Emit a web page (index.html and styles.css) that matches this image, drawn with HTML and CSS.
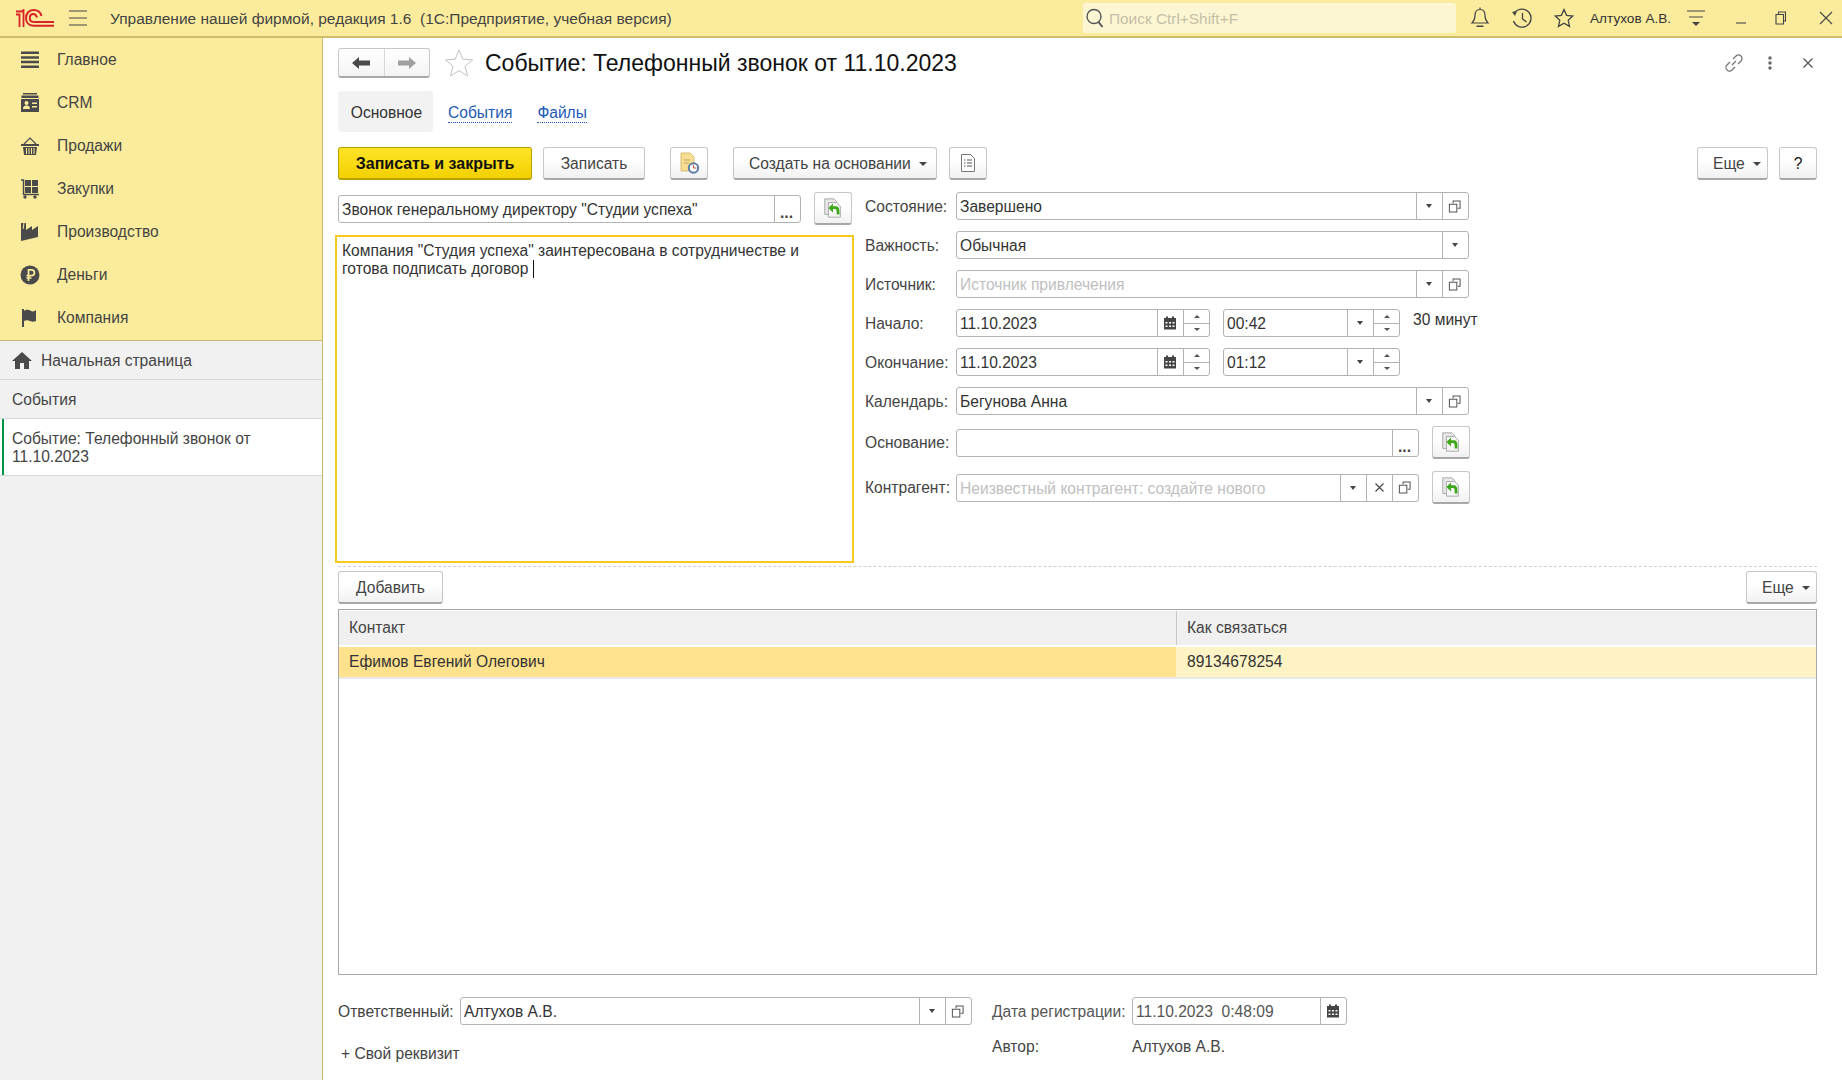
FILE: index.html
```html
<!DOCTYPE html>
<html lang="ru">
<head>
    <meta charset="UTF-8">
    <title>Событие: Телефонный звонок от 11.10.2023</title>
    <link rel="stylesheet" href="styles.css">
</head>
<body>
    <svg class="defs" width="0" height="0">
        <symbol id="i-copy" viewBox="0 0 14 14">
            <path d="M5.500 3.500V1h7.500v8h-2.500M1.500 4.500h8v8.500h-8z" fill="none" stroke="#555" stroke-width="1.100"/>
        </symbol>
        <symbol id="i-cal" viewBox="0 0 14 14">
            <path d="M1 2h12v11.500H1z" fill="#444"/>
            <path d="M3 0.500h2v3H3zM9 0.500h2v3H9z" fill="#444"/>
            <path d="M2.500 6h2v1.500h-2zM6 6h2v1.500H6zM9.500 6h2v1.500h-2zM2.500 9.500h2v1.500h-2zM6 9.500h2v1.500H6zM9.500 9.500h2v1.500h-2z" fill="#fff"/>
        </symbol>
        <symbol id="i-ret" viewBox="0 0 24 24">
            <path d="M3 2h10l3 3v14H3z" fill="#e8e8e8" stroke="#a4a4a4"/>
            <path d="M7 6h9l4 4v12H7z" fill="#f6f6f6" stroke="#a4a4a4"/>
            <path d="M7 12l5-5v3h3c3 0 4 2 4 6v3h-3v-3c0-2-.5-3-2-3h-2v4z" fill="#3da819"/>
        </symbol>
    </svg>

    <header class="topbar">
        <svg class="logo" width="38" height="19" viewBox="0 0 38 19">
            <path d="M0 5.500h3.500V18M0 2.500h5.500L7.500 1v17" fill="none" stroke="#d8232a" stroke-width="1.800"/>
            <path d="M25.500 7C24.500 3 21 1 17.500 1 12.500 1 10 5 10 9s2.500 7.700 7.500 7.700H38" fill="none" stroke="#d8232a" stroke-width="2"/>
            <path d="M21 8.500C20.300 6.500 19 5 17.500 5 15 5 13.800 7 13.800 9s1.200 3.900 3.700 3.900H38" fill="none" stroke="#d8232a" stroke-width="2"/>
        </svg>
        <svg class="burger" width="18" height="16" viewBox="0 0 18 16">
            <path d="M0 1h18M0 8h18M0 15h18" stroke="#444" stroke-width="1.200"/>
        </svg>
        <div class="app-title">Управление нашей фирмой, редакция 1.6&nbsp; (1С:Предприятие, учебная версия)</div>
        <div class="search">
            <svg width="20" height="22" viewBox="0 0 20 22">
                <circle cx="9" cy="9.500" r="7" fill="none" stroke="#555" stroke-width="1.400"/>
                <path d="M13.500 15l4 5" stroke="#555" stroke-width="2"/>
            </svg>
            <span>Поиск Ctrl+Shift+F</span>
        </div>
        <div class="top-icons">
            <svg class="t-bell" width="20" height="22" viewBox="0 0 20 22">
                <path d="M10 2.500c-4 0-5 3-5 6 0 4-1.500 6-3 7.500h16c-1.500-1.500-3-3.500-3-7.500 0-3-1-6-5-6zM10 .5v2" fill="none" stroke="#444" stroke-width="1.200"/>
                <path d="M6.500 18.500h7v1.500h-7z" fill="#444"/>
            </svg>
            <svg class="t-hist" width="22" height="22" viewBox="0 0 22 22">
                <path d="M4 5.500A9 9 0 1 1 2.500 14M11.500 6v6l4 3" fill="none" stroke="#444" stroke-width="1.300"/>
                <path d="M1 5l5-1-2 5z" fill="#444"/>
            </svg>
            <svg class="t-star" width="20" height="20" viewBox="0 0 20 20">
                <path d="M10 1.500l2.600 5.800 6.200.7-4.600 4.200 1.300 6.200L10 15.200l-5.500 3.200 1.300-6.200L1.200 8l6.200-.7z" fill="none" stroke="#444" stroke-width="1.300"/>
            </svg>
            <span class="user">Алтухов А.В.</span>
            <svg class="t-filter" width="18" height="18" viewBox="0 0 18 18">
                <path d="M0 2h18M2 8h14" stroke="#444" stroke-width="1.200"/>
                <path d="M5 13h8l-4 4z" fill="#444"/>
            </svg>
            <svg class="t-min" width="12" height="12" viewBox="0 0 12 12"><path d="M1 11h10" stroke="#555" stroke-width="1.200"/></svg>
            <svg class="t-rest" width="12" height="14" viewBox="0 0 12 14"><path d="M3.500 3V1h7v9H8.500M1 3.500h7.500v9.500H1z" fill="none" stroke="#444" stroke-width="1.100"/></svg>
            <svg class="t-close" width="14" height="14" viewBox="0 0 14 14"><path d="M1 1l12 12M13 1L1 13" stroke="#444" stroke-width="1.100"/></svg>
        </div>
    </header>

    <div class="layout">
        <aside class="sidebar">
            <nav class="menu">
                <a class="menu-item">
                    <svg width="20" height="20" viewBox="0 0 20 20"><path d="M1 1.500h18v2.500H1zM1 6.200h18v2.500H1zM1 10.800h18v2.500H1zM1 15.500h18v2.500H1z" fill="#4a4a4a"/></svg>
                    <span>Главное</span>
                </a>
                <a class="menu-item">
                    <svg width="20" height="20" viewBox="0 0 20 20"><path d="M3 0h14v1.500H3zM1.500 2.500h17V5h-17z" fill="#4a4a4a"/><path d="M1 6h18v13H1z" fill="#4a4a4a"/><circle cx="6.500" cy="10" r="2" fill="#fbec9d"/><path d="M3 16c0-3 2-3.500 3.500-3.500S10 13 10 16zM12 9.500h5V11h-5zM12 13h5v1.500h-5z" fill="#fbec9d"/></svg>
                    <span>CRM</span>
                </a>
                <a class="menu-item">
                    <svg width="20" height="20" viewBox="0 0 20 20"><path d="M1 8h18v2H1z" fill="#4a4a4a"/><path d="M3 11h14l-1 8H4z" fill="#4a4a4a"/><path d="M4 8l6-6 6 6" fill="none" stroke="#4a4a4a" stroke-width="1.200"/><path d="M6.500 12v6M9 12v6M11.500 12v6M14 12v6" stroke="#fbec9d"/></svg>
                    <span>Продажи</span>
                </a>
                <a class="menu-item">
                    <svg width="20" height="20" viewBox="0 0 20 20"><path d="M5 1h6v6H5zM12 1h6v6h-6zM5 8h6v6H5zM12 8h6v6h-6z" fill="#4a4a4a"/><path d="M1 1h2.500v14.500H19" fill="none" stroke="#4a4a4a" stroke-width="1.500"/><circle cx="5" cy="18" r="1.700" fill="#4a4a4a"/><circle cx="15" cy="18" r="1.700" fill="#4a4a4a"/></svg>
                    <span>Закупки</span>
                </a>
                <a class="menu-item">
                    <svg width="20" height="20" viewBox="0 0 20 20"><path d="M1 19V1h5v7l6-4v4l6-4v11z" fill="#4a4a4a"/><path d="M4 1l-1 6" stroke="#fbec9d"/></svg>
                    <span>Производство</span>
                </a>
                <a class="menu-item">
                    <svg width="20" height="20" viewBox="0 0 20 20"><circle cx="10" cy="10" r="9.500" fill="#4a4a4a"/><path d="M8.500 16V4.800h3a2.900 2.900 0 0 1 0 5.800h-5M6.500 13h5" fill="none" stroke="#fbec9d" stroke-width="1.700"/></svg>
                    <span>Деньги</span>
                </a>
                <a class="menu-item">
                    <svg width="20" height="20" viewBox="0 0 20 20"><path d="M2 1h2v18H2z" fill="#4a4a4a"/><path d="M4 3c3-2 5-1 7 0 2 1 4 0 5-1v11c-2 1-4 1-6 0s-4-1-6 0z" fill="#4a4a4a"/></svg>
                    <span>Компания</span>
                </a>
            </nav>
            <div class="open-tab home">
                <svg width="20" height="17" viewBox="0 0 20 17"><path d="M10 0L0 9h3v8h5v-6h4v6h5V9h3z" fill="#4a4a4a"/></svg>
                <span>Начальная страница</span>
            </div>
            <div class="open-tab"><span>События</span></div>
            <div class="open-tab active"><span>Событие: Телефонный звонок от 11.10.2023</span></div>
        </aside>

        <main class="content">
            <div class="head">
                <div class="nav-btns">
                    <button class="nav-btn">
                        <svg width="18" height="12" viewBox="0 0 18 12"><path d="M0 6l7-6v3.500h11v5H7V12z" fill="#4a4a4a"/></svg>
                    </button>
                    <button class="nav-btn">
                        <svg width="18" height="12" viewBox="0 0 18 12"><path d="M18 6l-7-6v3.500H0v5h11V12z" fill="#a0a0a0"/></svg>
                    </button>
                </div>
                <svg class="fav" width="30" height="28" viewBox="0 0 30 28">
                    <path d="M15 1l3.700 9.200 10 .7-7.700 6.300 2.500 9.700L15 21.600 6.500 27 9 17.200 1.300 10.900l10-.7z" fill="#fff" stroke="#c4c4c4"/>
                </svg>
                <h1 class="title">Событие: Телефонный звонок от 11.10.2023</h1>
                <div class="head-tools">
                    <svg width="20" height="20" viewBox="0 0 20 20"><path d="M8 12l4-4M6 9l-3 3a3.500 3.500 0 0 0 5 5l3-3M9 6l3-3a3.500 3.500 0 0 1 5 5l-3 3" fill="none" stroke="#777" stroke-width="1.300"/></svg>
                    <svg width="4" height="14" viewBox="0 0 4 14"><circle cx="2" cy="2" r="1.700" fill="#666"/><circle cx="2" cy="7" r="1.700" fill="#666"/><circle cx="2" cy="12" r="1.700" fill="#666"/></svg>
                    <svg class="head-close" width="10" height="10" viewBox="0 0 10 10"><path d="M.5.500l9 9M9.500.500l-9 9" stroke="#555" stroke-width="1.200"/></svg>
                </div>
            </div>

            <div class="tabs">
                <span class="tab current">Основное</span>
                <a class="tab link">События</a>
                <a class="tab link">Файлы</a>
            </div>

            <div class="toolbar">
                <button class="btn primary">Записать и закрыть</button>
                <button class="btn save">Записать</button>
                <button class="btn icon-btn doc-clock">
                    <svg width="22" height="22" viewBox="0 0 22 22">
                        <path d="M3 1h9l4 4v14H3z" fill="#f7dc93" stroke="#d8bc6c"/>
                        <path d="M6 8h6M6 11h5" stroke="#c4a95c"/>
                        <circle cx="15.500" cy="16" r="4.700" fill="#fff" stroke="#5b7ea8" stroke-width="2"/>
                        <path d="M15.500 13v3h3" fill="none" stroke="#d0483a"/>
                    </svg>
                </button>
                <button class="btn drop create">Создать на основании<i class="tri"></i></button>
                <button class="btn icon-btn">
                    <svg width="14" height="18" viewBox="0 0 14 18">
                        <path d="M.5.500h9l4 4v13H.5z" fill="#fff" stroke="#777"/>
                        <path d="M3 6h1.500M6 6h5M3 9h1.500M6 9h5M3 12h1.500M6 12h5" stroke="#555"/>
                    </svg>
                </button>
                <button class="btn drop more">Еще<i class="tri"></i></button>
                <button class="btn help">?</button>
            </div>

            <div class="form">
                <div class="form-left">
                    <div class="subject">
                        <div class="field subject-field">
                            <span class="val">Звонок генеральному директору "Студии успеха"</span>
                            <span class="cell dots">...</span>
                        </div>
                        <button class="btn icon-btn ret"><svg width="22" height="22"><use href="#i-ret"/></svg></button>
                    </div>
                    <div class="memo">Компания "Студия успеха" заинтересована в сотрудничестве и<br>готова подписать договор <i class="caret"></i></div>
                </div>

                <div class="form-right">
                    <div class="row">
                        <label>Состояние:</label>
                        <div class="field grow">
                            <span class="val">Завершено</span>
                            <span class="cell"><i class="tri"></i></span>
                            <span class="cell"><svg class="ico" width="13" height="13"><use href="#i-copy"/></svg></span>
                        </div>
                    </div>
                    <div class="row">
                        <label>Важность:</label>
                        <div class="field grow">
                            <span class="val">Обычная</span>
                            <span class="cell"><i class="tri"></i></span>
                        </div>
                    </div>
                    <div class="row">
                        <label>Источник:</label>
                        <div class="field grow">
                            <span class="val ph">Источник привлечения</span>
                            <span class="cell"><i class="tri"></i></span>
                            <span class="cell"><svg class="ico" width="13" height="13"><use href="#i-copy"/></svg></span>
                        </div>
                    </div>
                    <div class="row">
                        <label>Начало:</label>
                        <div class="field date">
                            <span class="val">11.10.2023</span>
                            <span class="cell"><svg class="ico" width="14" height="14"><use href="#i-cal"/></svg></span>
                            <span class="cell spin"><i class="up"></i><i class="down"></i></span>
                        </div>
                        <div class="field time">
                            <span class="val">00:42</span>
                            <span class="cell"><i class="tri"></i></span>
                            <span class="cell spin"><i class="up"></i><i class="down"></i></span>
                        </div>
                        <span class="duration">30 минут</span>
                    </div>
                    <div class="row">
                        <label>Окончание:</label>
                        <div class="field date">
                            <span class="val">11.10.2023</span>
                            <span class="cell"><svg class="ico" width="14" height="14"><use href="#i-cal"/></svg></span>
                            <span class="cell spin"><i class="up"></i><i class="down"></i></span>
                        </div>
                        <div class="field time">
                            <span class="val">01:12</span>
                            <span class="cell"><i class="tri"></i></span>
                            <span class="cell spin"><i class="up"></i><i class="down"></i></span>
                        </div>
                    </div>
                    <div class="row">
                        <label>Календарь:</label>
                        <div class="field grow">
                            <span class="val">Бегунова Анна</span>
                            <span class="cell"><i class="tri"></i></span>
                            <span class="cell"><svg class="ico" width="13" height="13"><use href="#i-copy"/></svg></span>
                        </div>
                    </div>
                    <div class="row tall">
                        <label>Основание:</label>
                        <div class="field short">
                            <span class="val"></span>
                            <span class="cell dots">...</span>
                        </div>
                        <button class="btn icon-btn ret"><svg width="22" height="22"><use href="#i-ret"/></svg></button>
                    </div>
                    <div class="row tall">
                        <label>Контрагент:</label>
                        <div class="field short">
                            <span class="val ph">Неизвестный контрагент: создайте нового</span>
                            <span class="cell"><i class="tri"></i></span>
                            <span class="cell">
                                <svg width="9" height="9" viewBox="0 0 9 9"><path d="M.5.500l8 8M8.500.500l-8 8" stroke="#444" stroke-width="1.100"/></svg>
                            </span>
                            <span class="cell"><svg class="ico" width="13" height="13"><use href="#i-copy"/></svg></span>
                        </div>
                        <button class="btn icon-btn ret"><svg width="22" height="22"><use href="#i-ret"/></svg></button>
                    </div>
                </div>
            </div>

            <div class="table-bar">
                <button class="btn add">Добавить</button>
                <button class="btn drop more2">Еще<i class="tri"></i></button>
            </div>

            <div class="grid">
                <div class="grid-head">
                    <div class="col-a">Контакт</div>
                    <div class="col-b">Как связаться</div>
                </div>
                <div class="grid-row">
                    <div class="col-a">Ефимов Евгений Олегович</div>
                    <div class="col-b">89134678254</div>
                </div>
            </div>

            <div class="footer">
                <div class="foot-left">
                    <div class="foot-owner">
                        <label>Ответственный:</label>
                        <div class="field owner">
                            <span class="val">Алтухов А.В.</span>
                            <span class="cell"><i class="tri"></i></span>
                            <span class="cell"><svg class="ico" width="13" height="13"><use href="#i-copy"/></svg></span>
                        </div>
                    </div>
                    <div class="own-prop">+ Свой реквизит</div>
                </div>
                <div class="foot-right">
                    <div class="foot-date">
                        <label>Дата регистрации:</label>
                        <div class="field reg">
                            <span class="val">11.10.2023&nbsp; 0:48:09</span>
                            <span class="cell"><svg class="ico" width="14" height="14"><use href="#i-cal"/></svg></span>
                        </div>
                    </div>
                    <div class="foot-author">
                        <label>Автор:</label>
                        <span>Алтухов А.В.</span>
                    </div>
                </div>
            </div>
        </main>
    </div>
</body>
</html>
```

FILE: styles.css
```css
* {
    box-sizing: border-box;
}

html, body {
    margin: 0;
    height: 100%;
    overflow: hidden;
}

body {
    font-family: "Liberation Sans", Arial, sans-serif;
    font-size: 15.6px;
    color: #333;
    background: #fff;
}

.defs {
    position: absolute;
}

button {
    font: inherit;
}

/* top bar */
.topbar {
    display: flex;
    align-items: center;
    height: 38px;
    background: #fbec9d;
    border-bottom: 2px solid #cfbd6c;
    padding-left: 16px;
}

.logo {
    flex: none;
}

.burger {
    flex: none;
    margin-left: 15px;
}

.app-title {
    margin-left: 23px;
    padding-top: 1px;
    font-size: 15.5px;
    color: #444;
    width: 973px;
    flex: none;
    white-space: nowrap;
}

.search {
    display: flex;
    align-items: center;
    gap: 4px;
    width: 373px;
    height: 30px;
    padding-left: 2px;
    background: #fdf6d2;
    border-radius: 3px;
    color: #c4c0a8;
    font-size: 15.4px;
    flex: none;
}

.search span {
    padding-top: 1px;
}

.top-icons {
    display: flex;
    align-items: center;
    margin-left: 14px;
}

.t-hist {
    margin-left: 21px;
}

.t-star {
    margin-left: 21px;
}

.user {
    margin-left: 16px;
    font-size: 13.6px;
    color: #333;
}

.t-filter {
    margin-left: 16px;
}

.t-min {
    margin-left: 30px;
}

.t-rest {
    margin-left: 28px;
}

.t-close {
    margin-left: 32px;
}

/* layout */
.layout {
    display: flex;
    height: 1042px;
}

.sidebar {
    width: 323px;
    flex: none;
    background: #f1f1f1;
    border-right: 1px solid #c9b96f;
}

.menu {
    background: #fbec9d;
    border-bottom: 1px solid #c9b96f;
    padding-bottom: 1px;
}

.menu-item {
    display: flex;
    align-items: center;
    height: 43px;
    padding-left: 20px;
    color: #444;
}

.menu-item span, .open-tab span {
    padding-top: 1px;
}

.menu-item svg {
    margin-right: 17px;
    flex: none;
}

.open-tab {
    display: flex;
    align-items: center;
    height: 39px;
    padding-left: 12px;
    border-bottom: 1px solid #d6d6d6;
    color: #444;
}

.home svg {
    margin-right: 9px;
    flex: none;
}

.open-tab.active {
    height: 57px;
    margin-top: 0;
    padding: 0 40px 0 12px;
    line-height: 18px;
    background: #fff;
    box-shadow: inset 2px 0 0 #fff, inset 4px 0 0 #00904a;
}

/* main */
.content {
    flex: 1;
    min-width: 0;
    padding: 10px 25px 0 15px;
}

.head {
    display: flex;
    align-items: center;
    height: 30px;
}

.nav-btns {
    display: flex;
    width: 92px;
    height: 30px;
    border: 1px solid #c8c8c8;
    border-bottom: 2px solid #a8a8a8;
    border-radius: 3px;
    background: linear-gradient(#fff, #f4f4f4);
}

.nav-btn {
    flex: 1;
    display: flex;
    align-items: center;
    justify-content: center;
    border: 0;
    padding: 0;
    background: none;
}

.nav-btn + .nav-btn {
    border-left: 1px solid #d8d8d8;
}

.fav {
    margin-left: 14px;
    flex: none;
}

.title {
    margin: 0 0 0 11px;
    font-size: 23px;
    font-weight: normal;
    color: #111;
    white-space: nowrap;
}

.head-tools {
    display: flex;
    align-items: center;
    margin-left: auto;
    margin-right: 4px;
    gap: 24px;
}

.head-close {
    margin-left: 7px;
}

.tabs {
    display: flex;
    align-items: center;
    height: 41px;
    margin-top: 13px;
}

.tab {
    line-height: 43px;
}

.tab.current {
    width: 95px;
    height: 41px;
    padding-left: 2px;
    text-align: center;
    background: #f2f2f2;
    border-radius: 4px;
    color: #333;
}

.tab.link {
    color: #1d5bb5;
    line-height: 19px;
    padding-top: 2px;
    border-bottom: 1px dotted #1d5bb5;
    margin-left: 15px;
}

.tab.link + .tab.link {
    margin-left: 25px;
}

.toolbar {
    display: flex;
    align-items: center;
    margin-top: 15px;
}

.btn {
    height: 33px;
    padding: 1px 0 0;
    border: 1px solid #c8c8c8;
    border-bottom: 2px solid #a8a8a8;
    border-radius: 3px;
    background: linear-gradient(#fff 40%, #f1f1f1);
    color: #444;
    white-space: nowrap;
    display: inline-flex;
    align-items: center;
    justify-content: center;
    flex: none;
}

.btn.drop {
    justify-content: flex-start;
    padding-left: 15px;
}

.btn.primary {
    width: 194px;
    font-size: 16px;
    font-weight: bold;
    color: #111;
    border-color: #b8a000;
    background: linear-gradient(#fde428, #f3d100);
}

.btn.save {
    width: 102px;
    margin-left: 11px;
}

.icon-btn {
    width: 38px;
    padding-top: 0;
}

.doc-clock {
    margin-left: 25px;
}

.btn.create {
    width: 204px;
    margin-left: 25px;
    margin-right: 12px;
}

.btn.more {
    width: 71px;
    margin-left: auto;
}

.btn.help {
    width: 38px;
    margin-left: 11px;
    color: #111;
}

.btn .tri {
    margin-left: 8px;
    border-left-width: 4px;
    border-right-width: 4px;
}

.tri {
    display: inline-block;
    width: 0;
    height: 0;
    border-left: 3.500px solid transparent;
    border-right: 3.500px solid transparent;
    border-top: 4px solid #444;
}

.cell .tri {
    margin-right: 1px;
}

.cell .ico {
    margin-right: 2px;
}

/* form */
.form {
    display: flex;
    margin-top: 12px;
    height: 375px;
}

.form-left {
    width: 514px;
    flex: none;
    margin-left: 0;
}

.subject {
    display: flex;
    align-items: center;
    height: 33px;
}

.field {
    display: flex;
    height: 28px;
    border: 1px solid #b3b3b3;
    border-radius: 3px;
    background: #fff;
    color: #333;
    flex: none;
}

.subject-field {
    width: 463px;
}

.subject .ret {
    margin-left: 13px;
}

.val {
    flex: 1;
    min-width: 0;
    padding-left: 3px;
    line-height: 27px;
    white-space: nowrap;
    overflow: hidden;
}

.ph {
    color: #c0c0c0;
}

.cell {
    width: 26px;
    flex: none;
    display: flex;
    align-items: center;
    justify-content: center;
    border-left: 1px solid #b3b3b3;
}

.dots {
    align-items: flex-end;
    padding: 0 2px 5px 0;
    line-height: 8px;
    font-weight: bold;
    color: #444;
}

.memo {
    height: 328px;
    width: 519px;
    margin: 10px 0 0 -3px;
    padding: 5px 5px;
    border: 2px solid #f8c81c;
    line-height: 18px;
    color: #333;
}

.caret {
    display: inline-block;
    width: 1px;
    height: 18px;
    background: #111;
    vertical-align: top;
}

.form-right {
    margin-left: 13px;
    width: 620px;
    flex: none;
}

.row {
    display: flex;
    align-items: center;
    height: 28px;
    margin-bottom: 11px;
}

.row.tall {
    height: 33px;
    margin-bottom: 12px;
}

.row label {
    width: 91px;
    padding-top: 1px;
    flex: none;
    color: #444;
}

.grow {
    width: 513px;
}

.date {
    width: 254px;
}

.time {
    width: 177px;
    margin-left: 13px;
}

.short {
    width: 463px;
}

.row .ret {
    margin-left: 13px;
}

.duration {
    margin: -7px 0 0 13px;
    white-space: nowrap;
}

.spin {
    flex-direction: column;
}

.spin .up, .spin .down {
    flex: 1;
    width: 100%;
    display: flex;
    align-items: center;
    justify-content: center;
}

.spin .up::before, .spin .down::before {
    content: '';
    border-left: 3px solid transparent;
    border-right: 3px solid transparent;
}

.spin .up::before {
    border-bottom: 3px solid #555;
}

.spin .down {
    border-top: 1px solid #b3b3b3;
}

.spin .down::before {
    border-top: 3px solid #555;
}

/* table */
.table-bar {
    display: flex;
    justify-content: space-between;
    align-items: center;
    margin-top: -1px;
    padding-top: 4px;
    border-top: 1px dashed #d0d0d0;
}

.btn.add {
    width: 105px;
}

.btn.more2 {
    width: 71px;
}

.grid {
    height: 366px;
    margin-top: 5px;
    border: 1px solid #a8a8a8;
}

.grid-head, .grid-row {
    display: flex;
}

.grid-head {
    height: 34px;
    background: #f0f0f0;
    line-height: 33px;
    color: #444;
    margin-top: 1px;
}

.grid-row {
    height: 30px;
    margin-top: 2px;
    line-height: 30px;
    background: #fdf3c5;
    border-bottom: 2px solid #e8e8e8;
    box-sizing: content-box;
}

.col-a {
    width: 837px;
    padding-left: 10px;
    flex: none;
}

.grid-head .col-b {
    border-left: 1px solid #c8c8c8;
    padding-left: 10px;
}

.grid-row .col-a {
    background: #fee28e;
}

.grid-row .col-b {
    padding-left: 11px;
}

/* footer */
.footer {
    display: flex;
    margin-top: 22px;
}

.foot-left {
    width: 654px;
    flex: none;
}

.foot-owner, .foot-date {
    display: flex;
    align-items: center;
}

.foot-owner label {
    width: 122px;
    padding-top: 1px;
    flex: none;
    color: #444;
}

.owner {
    width: 512px;
}

.own-prop {
    margin: 20px 0 0 3px;
    color: #444;
}

.foot-date label {
    width: 140px;
    padding-top: 1px;
    flex: none;
    color: #555;
}

.reg {
    width: 215px;
    color: #555;
}

.foot-author {
    display: flex;
    margin-top: 13px;
    color: #444;
}

.foot-author label {
    width: 140px;
    flex: none;
}
```
